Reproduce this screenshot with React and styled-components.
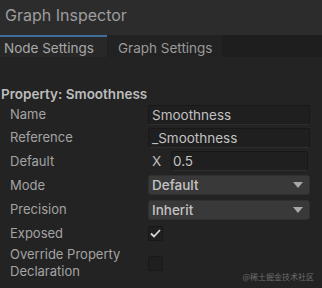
import React from "react";
import styled, { createGlobalStyle } from "styled-components";

const Global = createGlobalStyle`
  html, body { margin: 0; padding: 0; background: #232323; }
  body { width: 322px; height: 288px; overflow: hidden; font-family: "Inter", "Noto Sans", sans-serif; }
`;

const Panel = styled.div`
  width: 322px;
  height: 288px;
  display: flex;
  flex-direction: column;
  background: #232323;
  position: relative;
`;

const TitleBar = styled.div`
  height: 35px;
  background: #2c2c2c;
  display: flex;
  align-items: center;
  padding-left: 5px;
  color: #9e9e9e;
  font-size: 16px;
  padding-bottom: 5px;
  box-sizing: border-box;
`;

const Tabs = styled.div`
  height: 22px;
  display: flex;
  background: #1e1e1e;
`;

const Tab = styled.div`
  display: flex;
  align-items: center;
  flex-shrink: 0;
  white-space: nowrap;
  font-size: 13.5px;
  color: ${(p) => (p.$active ? "#a8a8a8" : "#9a9a9a")};
  background: ${(p) => (p.$active ? "#282828" : "#222222")};
  border-top: 2px solid ${(p) => (p.$active ? "#3f6f9a" : "transparent")};
  box-sizing: border-box;
  width: ${(p) => p.$w}px;
  padding-left: ${(p) => p.$pl}px;
  padding-top: 1px;
`;

const Body = styled.div`
  display: flex;
  flex-direction: column;
  padding-top: 28px;
`;

const Heading = styled.div`
  font-size: 13.5px;
  font-weight: 600;
  color: #bdbdbd;
  padding-left: 1px;
  height: 18px;
  line-height: 18px;
`;

const Row = styled.div`
  display: grid;
  grid-template-columns: 148px 162px;
  align-items: center;
  height: ${(p) => p.$h || 23}px;
`;

const Label = styled.div`
  padding-left: 10px;
  font-size: 13px;
  color: #a3a3a3;
  line-height: 17px;
`;

const TextField = styled.div`
  height: 20px;
  box-sizing: border-box;
  background: #1f1f1f;
  border: 1px solid #181818;
  border-bottom-color: #2e2e2e;
  border-radius: 2px;
  display: flex;
  align-items: center;
  padding-left: 3px;
  font-size: 13.5px;
  color: #c2c2c2;
`;

const FloatWrap = styled.div`
  display: flex;
  align-items: center;
`;

const AxisLabel = styled.span`
  width: 23px;
  padding-left: 4px;
  box-sizing: border-box;
  font-size: 13.5px;
  color: #c0c0c0;
`;

const FloatField = styled(TextField)`
  flex: 1;
  margin-right: 2px;
  padding-left: 1px;
`;

const Select = styled.div`
  height: 20px;
  box-sizing: border-box;
  background: #393939;
  border: 1px solid #303030;
  border-radius: 3px;
  display: flex;
  align-items: center;
  justify-content: space-between;
  padding: 0 6px 0 3px;
  font-size: 13.5px;
  font-weight: 500;
  color: #c4c4c4;
`;

const Arrow = styled.span`
  width: 0;
  height: 0;
  border-left: 5px solid transparent;
  border-right: 5px solid transparent;
  border-top: 6px solid #a8a8a8;
`;

const Check = styled.div`
  width: 15px;
  height: 15px;
  box-sizing: border-box;
  background: #1f1f1f;
  border: 1px solid #181818;
  border-radius: 2px;
  display: flex;
  align-items: center;
  justify-content: center;
`;

const Watermark = styled.div`
  position: absolute;
  right: 8px;
  bottom: 6px;
  font-size: 8px;
  color: #6e6e6e;
  font-family: "Noto Sans CJK SC", sans-serif;
`;

export default function App() {
  return (
    <>
      <Global />
      <Panel>
        <TitleBar>Graph Inspector</TitleBar>
        <Tabs>
          <Tab $active $w={107} $pl={4}>Node Settings</Tab>
          <Tab $w={115} $pl={11}>Graph Settings</Tab>
        </Tabs>
        <Body>
          <Heading>Property: Smoothness</Heading>
          <Row>
            <Label>Name</Label>
            <TextField>Smoothness</TextField>
          </Row>
          <Row>
            <Label>Reference</Label>
            <TextField>_Smoothness</TextField>
          </Row>
          <Row $h={24}>
            <Label>Default</Label>
            <FloatWrap>
              <AxisLabel>X</AxisLabel>
              <FloatField>0.5</FloatField>
            </FloatWrap>
          </Row>
          <Row $h={24}>
            <Label>Mode</Label>
            <Select>Default<Arrow /></Select>
          </Row>
          <Row $h={25}>
            <Label>Precision</Label>
            <Select>Inherit<Arrow /></Select>
          </Row>
          <Row $h={23}>
            <Label>Exposed</Label>
            <Check>
              <svg width="11" height="9" viewBox="0 0 11 9">
                <path d="M1 4.5 L4 7.5 L10 1" fill="none" stroke="#d8d8d8" strokeWidth="1.8" />
              </svg>
            </Check>
          </Row>
          <Row $h={36}>
            <Label>Override Property<br />Declaration</Label>
            <Check />
          </Row>
        </Body>
        <Watermark>@稀土掘金技术社区</Watermark>
      </Panel>
    </>
  );
}
